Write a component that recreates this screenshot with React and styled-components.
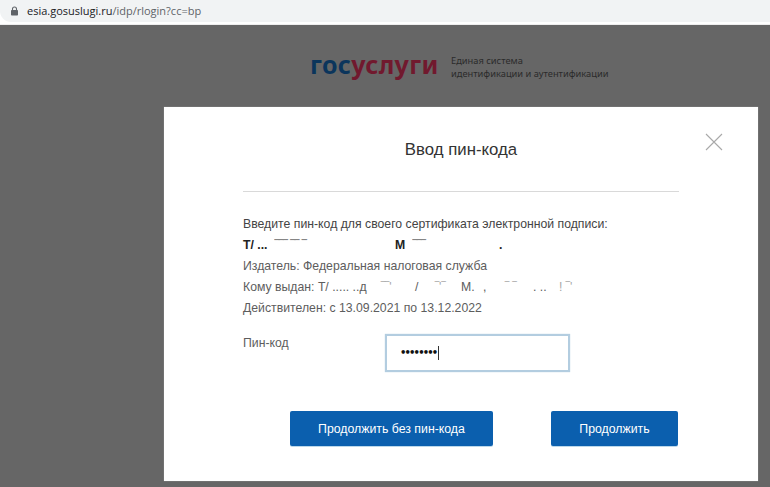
import React from "react";
import styled, { createGlobalStyle } from "styled-components";

const Global = createGlobalStyle`
  html, body { margin: 0; padding: 0; width: 770px; height: 487px; overflow: hidden; background: #666; }
  body { font-family: "Liberation Sans", Arial, sans-serif; }
`;
const Page = styled.div`
  width: 770px; height: 487px; display: flex; flex-direction: column; background: #666; overflow: hidden;
`;
const BrowserBar = styled.div`
  height: 25px; background: #fff; display: flex; align-items: flex-start; box-sizing: border-box; border-bottom: 1px solid #eee;
`;
const UrlPill = styled.div`
  width: 770px; height: 22px; background: #f1f3f4; border-radius: 0 0 0 11px; display: flex; align-items: center; padding-left: 11px; gap: 9px; box-sizing: border-box;
`;
const Url = styled.div`
  font-family: "Open Sans", sans-serif; font-size: 11px; color: #5f6368; position: relative; top: -1px;
  b { font-weight: 400; color: #202124; }
`;
const Brand = styled.div`
  height: 82px; display: flex; align-items: flex-start; padding: 24px 0 0 310px; box-sizing: border-box;
`;
const Logo = styled.div`
  font-family: "Noto Sans", sans-serif; font-weight: 700; font-size: 25px; line-height: 30px; letter-spacing: .35px; width: 141px; color: #71192e;
  span { color: #0b355c; }
`;
const Tagline = styled.div`
  font-family: "Noto Sans", sans-serif; font-size: 9.3px; line-height: 12.5px; color: #2b2b2b; padding-top: 6px;
`;
const Modal = styled.div`
  margin-left: 164px; width: 594px; height: 374px; background: #fff; box-sizing: border-box; padding: 0 79px; position: relative; display: flex; flex-direction: column; box-shadow: 0 0 1px #aaa;
`;
const Title = styled.h1`
  margin: 0; height: 85px; box-sizing: border-box; padding-top: 33px; font-size: 16.8px; line-height: 20px; font-weight: 400; color: #333; text-align: center; border-bottom: 1px solid #d9d9d9;
`;
const Close = styled.svg`
  position: absolute; left: 541px; top: 26px; width: 18px; height: 18px;
`;
const Info = styled.div`
  padding-top: 22px; font-size: 12.25px; line-height: 21px; color: #5d5d5d;
`;
const Lead = styled.div`color: #444;`;
const Line = styled.div`
  height: 21px; white-space: pre;
`;
const Frag = styled.span`
  display: inline-block; vertical-align: baseline; width: ${p => p.$w}px; white-space: pre; height: 21px; font-weight: ${p => (p.$bold ? 700 : 400)}; color: ${p => (p.$bold ? "#222" : "inherit")}; opacity: ${p => (p.$faint ? 0.55 : 1)};
`;
const PinRow = styled.div`
  display: flex; margin-top: 15px; align-items: flex-start;
`;
const PinLabel = styled.div`
  width: 142px; font-size: 12.25px; line-height: 16px; color: #5d5d5d; padding-top: 1px;
`;
const PinBox = styled.div`
  width: 185px; height: 38px; box-sizing: border-box; border: 2px solid #b3cde0; box-shadow: 0 0 1px #b3cde0; background: #fff; display: flex; align-items: center; padding-left: 13px;
`;
const Dots = styled.span`
  font-size: 10px; letter-spacing: -1.85px; color: #111; line-height: 1; font-family: "DejaVu Sans", sans-serif; font-weight: 700;
`;
const Caret = styled.span`
  display: inline-block; width: 1px; height: 14px; margin-left: 2px; background: #333;
`;
const Actions = styled.div`
  display: flex; justify-content: space-between; padding: 0 1px 0 47px; margin-top: 39px;
`;
const Btn = styled.button`
  width: ${p => p.$w}px; height: 35px; border: 0; border-radius: 2px; background: #0b5fae; color: #fff; font-family: inherit; font-size: 12.3px; padding: 0; box-shadow: 0 1px 0 #bcd8ea;
`;

export default function App() {
  return (
    <Page>
      <Global />
      <BrowserBar>
        <UrlPill>
          <svg width="7" height="10" viewBox="0 0 7 10">
            <path d="M1.5 4.5V3a2 2 0 0 1 4 0v1.5" fill="none" stroke="#5f6368" strokeWidth="1.1" />
            <rect x="0" y="4" width="7" height="5.5" rx=".8" fill="#5f6368" />
          </svg>
          <Url><b>esia.gosuslugi.ru</b>/idp/rlogin?cc=bp</Url>
        </UrlPill>
      </BrowserBar>
      <Brand>
        <Logo><span>гос</span>услуги</Logo>
        <Tagline>Единая система<br />идентификации и аутентификации</Tagline>
      </Brand>
      <Modal>
        <Close viewBox="0 0 18 18">
          <path d="M1 1L17 17M17 1L1 17" stroke="#a9a9a9" strokeWidth="1.1" fill="none" />
        </Close>
        <Title>Ввод пин-кода</Title>
        <Info>
          <Lead>Введите пин-код для своего сертификата электронной подписи:</Lead>
          <Line><Frag $bold $w={32}>Т/ ...</Frag><Frag $bold $faint $w={72}>‾‾‾ ‾‾ ‾</Frag><Frag $w={48}> </Frag><Frag $bold $w={18}>М</Frag><Frag $bold $faint $w={34}>‾‾‾</Frag><Frag $w={52}> </Frag><Frag $bold $w={8}>.</Frag></Line>
          <Line>Издатель: Федеральная налоговая служба</Line>
          <Line><Frag $w={130}>Кому выдан: Т/ ..... ..д</Frag><Frag $w={8}> </Frag><Frag $faint $w={34}>‾‾'</Frag><Frag $w={20}>/</Frag><Frag $faint $w={26}>‾'‾</Frag><Frag $w={22}>М.</Frag><Frag $w={22}>,</Frag><Frag $faint $w={28}>‾ ‾</Frag><Frag $w={26}>. ..</Frag><Frag $faint $w={24}>! ‾'</Frag></Line>
          <Line>Действителен: с 13.09.2021 по 13.12.2022</Line>
        </Info>
        <PinRow>
          <PinLabel>Пин-код</PinLabel>
          <PinBox><Dots>••••••••</Dots><Caret /></PinBox>
        </PinRow>
        <Actions>
          <Btn $w={203}>Продолжить без пин-кода</Btn>
          <Btn $w={127}>Продолжить</Btn>
        </Actions>
      </Modal>
    </Page>
  );
}
